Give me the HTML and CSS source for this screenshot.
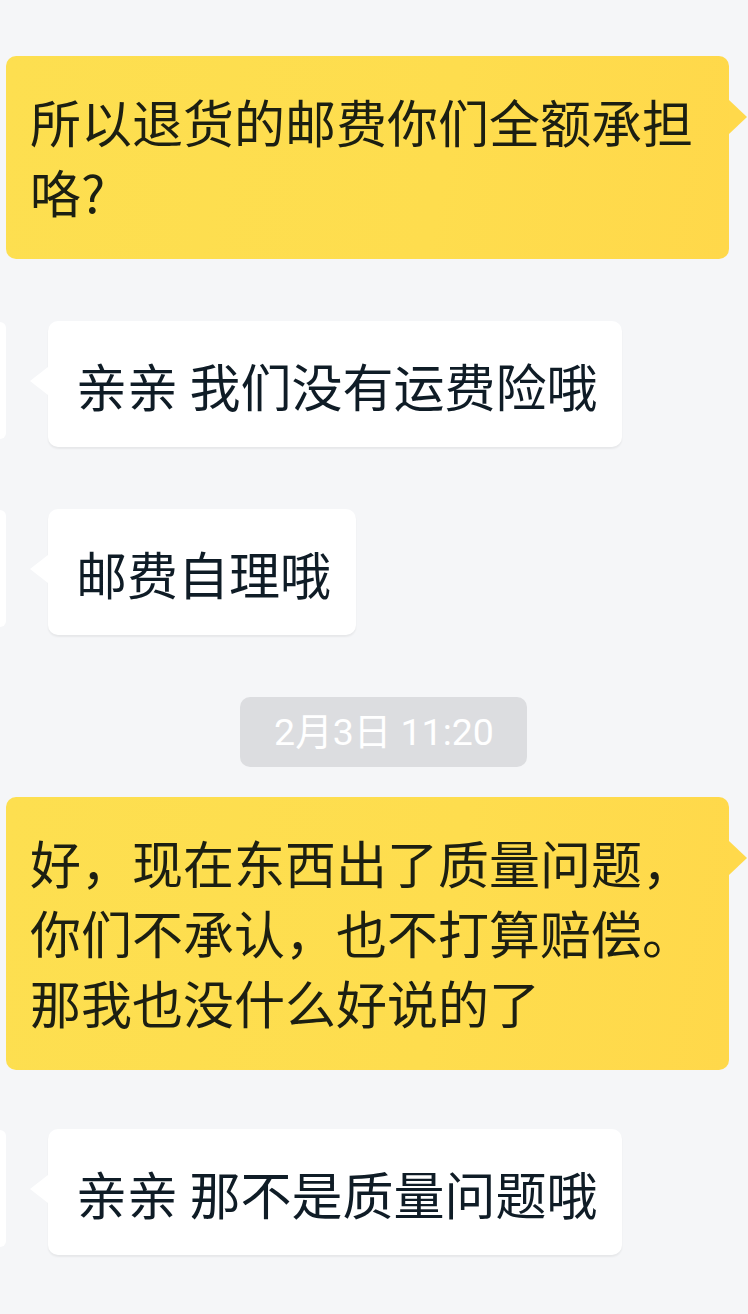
FILE: index.html
```html
<!DOCTYPE html>
<html lang="zh-CN">
<head>
<meta charset="utf-8">
<link rel="stylesheet" href="styles.css">
</head>
<body>
<div class="chat">
  <div class="row row-out">
    <div class="bubble bubble-out">所以退货的邮费你们全额承担咯?</div>
  </div>
  <div class="row row-in">
    <div class="avatar"></div>
    <div class="bubble bubble-in">亲亲 我们没有运费险哦</div>
  </div>
  <div class="row row-in">
    <div class="avatar"></div>
    <div class="bubble bubble-in">邮费自理哦</div>
  </div>
  <div class="row row-time">
    <div class="time">2月3日 11:20</div>
  </div>
  <div class="row row-out row-after-time">
    <div class="bubble bubble-out">好，现在东西出了质量问题，你们不承认，也不打算赔偿。那我也没什么好说的了</div>
  </div>
  <div class="row row-in">
    <div class="avatar"></div>
    <div class="bubble bubble-in">亲亲 那不是质量问题哦</div>
  </div>
</div>
</body>
</html>
```
FILE: styles.css
```css
* { box-sizing: border-box; }
html, body {
  margin: 0;
  padding: 0;
  background: #f5f6f8;
}
body {
  width: 748px;
  height: 1314px;
  overflow: hidden;
  font-family: "Noto Sans CJK SC", "Noto Sans", sans-serif;
}
.chat {
  display: flex;
  flex-direction: column;
  padding-top: 56px;
}
.row {
  display: flex;
  align-items: flex-start;
  margin-bottom: 62px;
}
.row-time {
  justify-content: center;
  padding-left: 19px;
  margin-bottom: 30px;
}
.row-after-time {
  margin-bottom: 59px;
}
.bubble {
  position: relative;
  font-size: 51px;
  line-height: 70px;
  border-radius: 10px;
}
.bubble-out {
  margin-left: 6px;
  width: 723px;
  padding: 30px 26px 33px 24px;
  background: linear-gradient(100deg, #fddf50 0%, #fedd4e 60%, #ffd84a 100%);
  color: #1c1f12;
}
.bubble-out::after {
  content: "";
  position: absolute;
  right: -18px;
  top: 44px;
  border-left: 18px solid #ffd94b;
  border-top: 17px solid transparent;
  border-bottom: 17px solid transparent;
}
.avatar {
  width: 6px;
  height: 117px;
  margin-top: 1px;
  background: #ffffff;
  border-radius: 0 6px 6px 0;
  flex: none;
}
.bubble-in {
  margin-left: 42px;
  padding: 29px 25px 27px 28px;
  background: #ffffff;
  color: #0f1c26;
  box-shadow: 0 2px 2px rgba(0, 0, 0, 0.06);
}
.bubble-in::before {
  content: "";
  position: absolute;
  left: -18px;
  top: 46px;
  border-right: 18px solid #ffffff;
  border-top: 14px solid transparent;
  border-bottom: 14px solid transparent;
}
.time {
  height: 70px;
  line-height: 70px;
  padding: 0 33px 0 34px;
  background: #dcdde0;
  color: #ffffff;
  border-radius: 10px;
  font-family: "Roboto", "Noto Sans CJK SC", sans-serif;
  font-size: 37.5px;
}
```
